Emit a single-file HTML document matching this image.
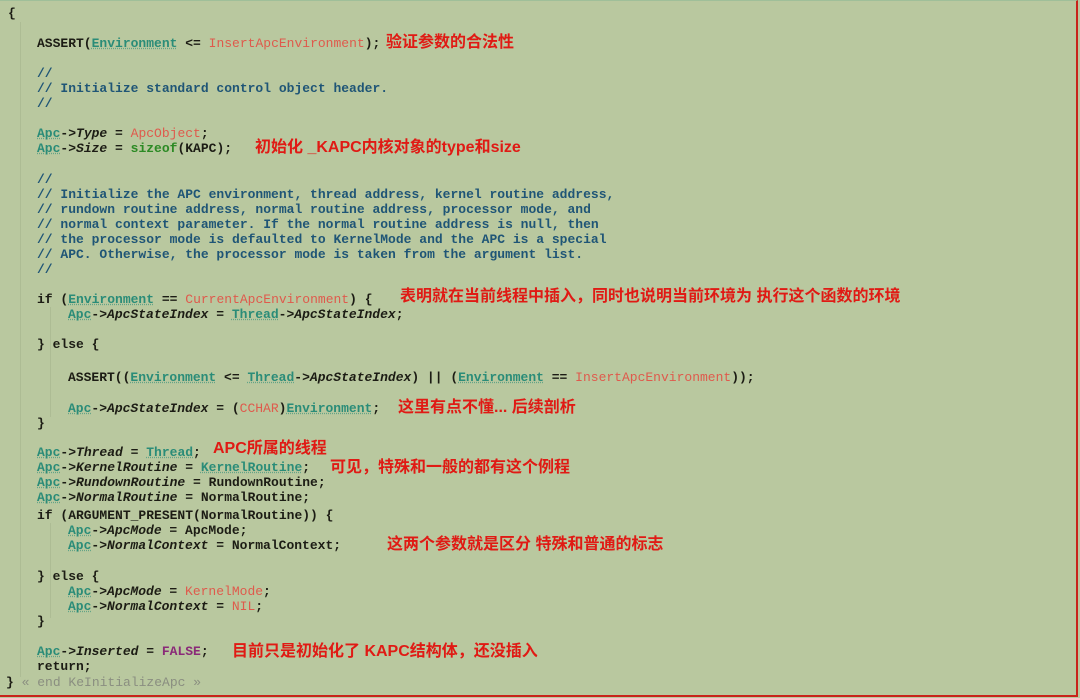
<!DOCTYPE html>
<html><head><meta charset="utf-8"><style>
html,body{margin:0;padding:0}
body{width:1080px;height:698px;background:#b9c89f;position:relative;overflow:hidden;font-family:"Liberation Mono",monospace;font-size:13px;color:#1c1c14;font-weight:bold}
.bd{position:absolute;left:0;top:0;width:1076px;height:694px;border-right:2px solid #c8231a;border-bottom:2px solid #c8231a;border-top:1px solid #9fbf99}
.l{position:absolute;white-space:pre;line-height:15px;height:15px}
.c{color:#1f5576}
.t{color:#2a8c78;text-decoration:underline dotted rgba(42,140,120,0.6)}
.r{color:#df5a4c;font-weight:normal}
.g{color:#2c8a24}
.p{color:#8a2a78}
.i{font-style:italic}
.gr{color:#8a8e80;font-weight:normal}
.a{position:absolute;white-space:pre;color:#e01a14;font-family:"Liberation Sans","Noto Sans CJK SC",sans-serif;font-weight:bold;font-size:16px;line-height:18px}
.vl{position:absolute;border-left:1px solid #adbc94}
</style></head><body>
<div class="bd"></div>
<div class="vl" style="left:20px;top:22px;height:655px"></div>
<div class="vl" style="left:50px;top:307px;height:110px"></div>
<div class="vl" style="left:50px;top:523px;height:95px"></div>
<div class="l" style="left:8px;top:6px">{</div>
<div class="l" style="left:37px;top:36px">ASSERT(<span class="t">Environment</span> &lt;= <span class="r">InsertApcEnvironment</span>);</div>
<div class="a" style="left:386px;top:34px">验证参数的合法性</div>
<div class="l c" style="left:37px;top:66px">//</div>
<div class="l c" style="left:37px;top:81px">// Initialize standard control object header.</div>
<div class="l c" style="left:37px;top:96px">//</div>
<div class="l" style="left:37px;top:126px"><span class="t">Apc</span>-&gt;<span class="i">Type</span> = <span class="r">ApcObject</span>;</div>
<div class="l" style="left:37px;top:141px"><span class="t">Apc</span>-&gt;<span class="i">Size</span> = <span class="g">sizeof</span>(KAPC);</div>
<div class="a" style="left:255px;top:139px">初始化 _KAPC内核对象的type和size</div>
<div class="l c" style="left:37px;top:172px">//</div>
<div class="l c" style="left:37px;top:187px">// Initialize the APC environment, thread address, kernel routine address,</div>
<div class="l c" style="left:37px;top:202px">// rundown routine address, normal routine address, processor mode, and</div>
<div class="l c" style="left:37px;top:217px">// normal context parameter. If the normal routine address is null, then</div>
<div class="l c" style="left:37px;top:232px">// the processor mode is defaulted to KernelMode and the APC is a special</div>
<div class="l c" style="left:37px;top:247px">// APC. Otherwise, the processor mode is taken from the argument list.</div>
<div class="l c" style="left:37px;top:262px">//</div>
<div class="l" style="left:37px;top:292px">if (<span class="t">Environment</span> == <span class="r">CurrentApcEnvironment</span>) {</div>
<div class="a" style="left:400px;top:288px">表明就在当前线程中插入，同时也说明当前环境为 执行这个函数的环境</div>
<div class="l" style="left:68px;top:307px"><span class="t">Apc</span>-&gt;<span class="i">ApcStateIndex</span> = <span class="t">Thread</span>-&gt;<span class="i">ApcStateIndex</span>;</div>
<div class="l" style="left:37px;top:337px">} else {</div>
<div class="l" style="left:68px;top:370px">ASSERT((<span class="t">Environment</span> &lt;= <span class="t">Thread</span>-&gt;<span class="i">ApcStateIndex</span>) || (<span class="t">Environment</span> == <span class="r">InsertApcEnvironment</span>));</div>
<div class="l" style="left:68px;top:401px"><span class="t">Apc</span>-&gt;<span class="i">ApcStateIndex</span> = (<span class="r">CCHAR</span>)<span class="t">Environment</span>;</div>
<div class="a" style="left:398px;top:399px">这里有点不懂... 后续剖析</div>
<div class="l" style="left:37px;top:416px">}</div>
<div class="l" style="left:37px;top:445px"><span class="t">Apc</span>-&gt;<span class="i">Thread</span> = <span class="t">Thread</span>;</div>
<div class="a" style="left:213px;top:440px">APC所属的线程</div>
<div class="l" style="left:37px;top:460px"><span class="t">Apc</span>-&gt;<span class="i">KernelRoutine</span> = <span class="t">KernelRoutine</span>;</div>
<div class="a" style="left:330px;top:459px">可见，特殊和一般的都有这个例程</div>
<div class="l" style="left:37px;top:475px"><span class="t">Apc</span>-&gt;<span class="i">RundownRoutine</span> = RundownRoutine;</div>
<div class="l" style="left:37px;top:490px"><span class="t">Apc</span>-&gt;<span class="i">NormalRoutine</span> = NormalRoutine;</div>
<div class="l" style="left:37px;top:508px">if (ARGUMENT_PRESENT(NormalRoutine)) {</div>
<div class="l" style="left:68px;top:523px"><span class="t">Apc</span>-&gt;<span class="i">ApcMode</span> = ApcMode;</div>
<div class="l" style="left:68px;top:538px"><span class="t">Apc</span>-&gt;<span class="i">NormalContext</span> = NormalContext;</div>
<div class="a" style="left:387px;top:536px">这两个参数就是区分 特殊和普通的标志</div>
<div class="l" style="left:37px;top:569px">} else {</div>
<div class="l" style="left:68px;top:584px"><span class="t">Apc</span>-&gt;<span class="i">ApcMode</span> = <span class="r">KernelMode</span>;</div>
<div class="l" style="left:68px;top:599px"><span class="t">Apc</span>-&gt;<span class="i">NormalContext</span> = <span class="r">NIL</span>;</div>
<div class="l" style="left:37px;top:614px">}</div>
<div class="l" style="left:37px;top:644px"><span class="t">Apc</span>-&gt;<span class="i">Inserted</span> = <span class="p">FALSE</span>;</div>
<div class="a" style="left:232px;top:643px">目前只是初始化了 KAPC结构体，还没插入</div>
<div class="l" style="left:37px;top:659px">return;</div>
<div class="l" style="left:6px;top:675px">} <span class="gr">« end KeInitializeApc »</span></div>
</body></html>
